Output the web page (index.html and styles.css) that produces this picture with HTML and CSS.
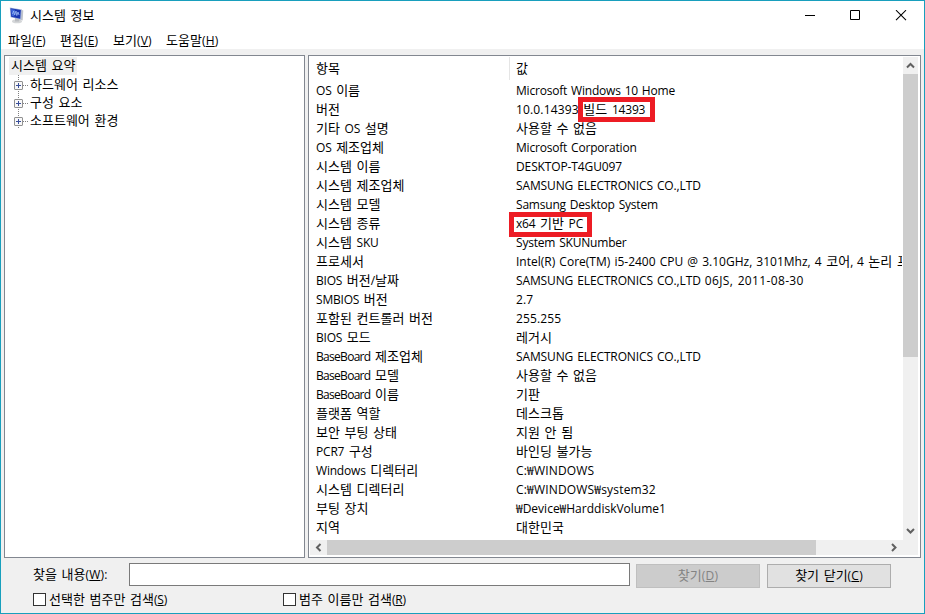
FILE: index.html
```
<!DOCTYPE html>
<html lang="ko">
<head>
<meta charset="utf-8">
<title>시스템 정보</title>
<link rel="stylesheet" href="styles.css">
</head>
<body>
<div class="window">
  <header class="titlebar">
    <svg class="app-icon" width="16" height="17" viewBox="0 0 16 17">
      <ellipse cx="8" cy="14.200" rx="5" ry="2" fill="#d4d6d8"/>
      <path d="M6 10l5 1-1 3.500H6z" fill="#b9bcc0"/>
      <path d="M12 2.500l2.300 1-.6 10-2.200-.8z" fill="#c0c4ca"/>
      <path d="M.8.5l12 2-.7 10.300L1.500 10.300z" fill="#a9b8dc"/>
      <path d="M1.500 1.300l10.300 1.700-.6 8.800-9-2.100z" fill="#1835b0"/>
      <path d="M2 2l4 .7-.8 6.800-2.300-.6z" fill="#3f66d8"/>
      <path d="M3.500 7l1.200-3 1 4 1.300-4 .8 4.500L9 5l1 3" fill="none" stroke="#9dbdf5" stroke-width=".8"/>
    </svg>
    <h1>시스템 정보</h1>
    <svg class="controls" width="103" height="12" viewBox="0 0 103 12" fill="none" stroke="#000">
      <path d="M0 5.500h10"/>
      <path d="M45.500.5h9v9h-9z"/>
      <path d="M91 .2l10 10M101 .2l-10 10" stroke-width="1.100"/>
    </svg>
  </header>
  <nav class="menu">
    <span>파일<span class="en key">(<u>F</u>)</span></span>
    <span>편집<span class="en key">(<u>E</u>)</span></span>
    <span>보기<span class="en key">(<u>V</u>)</span></span>
    <span>도움말<span class="en key">(<u>H</u>)</span></span>
  </nav>
  <main class="panes">
    <section class="tree">
      <div class="root"><span>시스템 요약</span></div>
      <div class="node"><svg width="16" height="18" viewBox="0 0 16 18"><use href="#plus"/></svg><span>하드웨어 리소스</span></div>
      <div class="node"><svg width="16" height="18" viewBox="0 0 16 18"><use href="#plus"/></svg><span>구성 요소</span></div>
      <div class="node"><svg width="16" height="18" viewBox="0 0 16 18"><use href="#plus"/></svg><span>소프트웨어 환경</span></div>
    </section>
    <section class="list">
      <div class="table">
        <div class="row head"><span>항목</span><span>값</span></div>
        <div class="row"><span><span class="en">OS</span> 이름</span><span class="en">Microsoft Windows 10 Home</span></div>
        <div class="row"><span>버전</span><span class="build"><span class="en num">10.0.14393</span> 빌드 <span class="en">14393</span></span></div>
        <div class="row"><span>기타 <span class="en">OS</span> 설명</span><span>사용할 수 없음</span></div>
        <div class="row"><span><span class="en">OS</span> 제조업체</span><span class="en">Microsoft Corporation</span></div>
        <div class="row"><span>시스템 이름</span><span class="en caps">DESKTOP-T4GU097</span></div>
        <div class="row"><span>시스템 제조업체</span><span class="en caps">SAMSUNG ELECTRONICS CO.,LTD</span></div>
        <div class="row"><span>시스템 모델</span><span class="en">Samsung Desktop System</span></div>
        <div class="row"><span>시스템 종류</span><span class="arch"><span class="en">x64</span> 기반 <span class="en">PC</span></span></div>
        <div class="row"><span>시스템 <span class="en">SKU</span></span><span class="en">System SKUNumber</span></div>
        <div class="row"><span>프로세서</span><span><span class="en cpu">Intel(R) Core(TM) i5-2400 CPU @ 3.10GHz, 3101Mhz, 4</span> 코어<span class="en">, 4</span> 논리 프로세서</span></div>
        <div class="row"><span><span class="en">BIOS</span> 버전<span class="en">/</span>날짜</span><span class="en caps">SAMSUNG ELECTRONICS CO.,LTD <span class="num">06JS, 2011-08-30</span></span></div>
        <div class="row"><span><span class="en">SMBIOS</span> 버전</span><span class="en num">2.7</span></div>
        <div class="row"><span>포함된 컨트롤러 버전</span><span class="en num">255.255</span></div>
        <div class="row"><span><span class="en">BIOS</span> 모드</span><span>레거시</span></div>
        <div class="row"><span><span class="en board">BaseBoard</span> 제조업체</span><span class="en caps">SAMSUNG ELECTRONICS CO.,LTD</span></div>
        <div class="row"><span><span class="en board">BaseBoard</span> 모델</span><span>사용할 수 없음</span></div>
        <div class="row"><span><span class="en board">BaseBoard</span> 이름</span><span>기판</span></div>
        <div class="row"><span>플랫폼 역할</span><span>데스크톱</span></div>
        <div class="row"><span>보안 부팅 상태</span><span>지원 안 됨</span></div>
        <div class="row"><span><span class="en">PCR7</span> 구성</span><span>바인딩 불가능</span></div>
        <div class="row"><span><span class="en">Windows</span> 디렉터리</span><span class="en path">C:₩WINDOWS</span></div>
        <div class="row"><span>시스템 디렉터리</span><span class="en path">C:₩WINDOWS₩system32</span></div>
        <div class="row"><span>부팅 장치</span><span class="en device">₩Device₩HarddiskVolume1</span></div>
        <div class="row"><span>지역</span><span>대한민국</span></div>
      </div>
      <div class="vscroll">
        <svg width="15" height="17" viewBox="0 0 15 17"><path d="M4 10.500l3.500-3.500 3.500 3.500"/></svg>
        <div class="thumb"></div>
        <svg width="15" height="17" viewBox="0 0 15 17"><path d="M4 6l3.500 3.500L11 6"/></svg>
      </div>
      <div class="hscroll">
        <svg width="17" height="15" viewBox="0 0 17 15"><path d="M10.500 4L7 7.500l3.500 3.500"/></svg>
        <div class="thumb"></div>
        <svg width="17" height="15" viewBox="0 0 17 15"><path d="M7 4l3.500 3.500L7 11"/></svg>
      </div>
    </section>
  </main>
  <footer>
    <div class="find">
      <label><span>찾을 내용<span class="en key">(<u>W</u>):</span></span></label>
      <input type="text">
      <button disabled><span>찾기<span class="en key">(<u>D</u>)</span></span></button>
      <button><span>찾기 닫기<span class="en key">(<u>C</u>)</span></span></button>
    </div>
    <div class="options">
      <div class="option"><i></i><span>선택한 범주만 검색<span class="en">(<u>S</u>)</span></span></div>
      <div class="option"><i></i><span>범주 이름만 검색<span class="en">(<u>R</u>)</span></span></div>
    </div>
  </footer>
</div>
<svg width="0" height="0" class="defs">
  <symbol id="plus" viewBox="0 0 16 18">
    <path d="M4.500 0v18M9 10.500h5" stroke="#808080" stroke-dasharray="1 1"/>
    <rect x=".5" y="6.500" width="8" height="8" rx=".5" fill="#f8f8f8" stroke="#919191"/>
    <path d="M2 10.500h5M4.500 8v5" stroke="#3a4f9a"/>
  </symbol>
</svg>
</body>
</html>
```
FILE: styles.css
```
*, *::after { box-sizing: border-box; }
body {
  margin: 0;
  font: 13px/19px "Noto Sans CJK KR", sans-serif;
  word-spacing: 1px;
  color: #000;
  overflow: hidden;
}
.defs { position: absolute; }
.en {
  font-family: "Open Sans", "Noto Sans CJK KR", sans-serif;
  font-size: 12px;
  letter-spacing: -0.2px;
}
.caps { letter-spacing: -0.12px; }
.num { letter-spacing: 0.15px; }
.caps .num { letter-spacing: 0.35px; }
.cpu { letter-spacing: 0; }
.board { letter-spacing: -0.7px; }
.path { letter-spacing: 0.18px; }
.device { letter-spacing: 0; }
.key { letter-spacing: 0.2px; }
u { text-underline-offset: 1px; }
.window {
  width: 925px;
  height: 614px;
  border: 1px solid #189fbd;
  background: #f0f0f0;
  display: flex;
  flex-direction: column;
}
.titlebar {
  height: 29px;
  background: #fff;
  display: flex;
  align-items: center;
  padding: 0 16px 0 8px;
}
.titlebar h1 {
  font-size: 13px;
  font-weight: 400;
  margin: -2px auto 0 5px;
}
.controls { margin-top: 1px; }
.menu {
  height: 19px;
  background: #fff;
  display: grid;
  grid-template-columns: 52px 53px 53px 60px;
  padding-left: 7px;
}
.panes {
  height: 503px;
  margin: 6px 3px 0;
  display: flex;
  gap: 3px;
}
.tree {
  width: 301px;
  border: 1px solid #828790;
  background: #fff;
  padding: 1px 4px;
  line-height: 18px;
}
.root {
  width: 68px;
  height: 18px;
  padding-left: 2px;
  background: #f0f0f0;
}
.root span { display: block; position: relative; top: -1px; }
.node {
  display: flex;
  height: 18px;
  padding-left: 5px;
}
.list {
  flex: 1;
  border: 1px solid #828790;
  background: #fff;
  padding: 1px 2px 1px 1px;
  display: grid;
  grid-template-columns: 1fr 15px;
  grid-template-rows: 483px 15px;
  min-width: 0;
}
.table { overflow: hidden; padding-right: 1px; }
.row {
  display: grid;
  grid-template-columns: 200px 1fr;
  height: 19px;
  white-space: pre;
}
.row > span { padding-left: 6px; min-width: 0; position: relative; }
.row:nth-child(11) > span { overflow: hidden; }
.row > .en { padding-top: 1px; }
.head { height: 23px; line-height: 22px; }
.head > span:first-child { border-right: 1px solid #e5e5e5; }
.build::after, .arch::after {
  content: "";
  position: absolute;
  border: 5px solid #ed1c24;
  height: 25px;
}
.build::after { left: 68px; top: -2px; width: 77px; }
.arch::after { left: -1px; top: -1px; width: 83px; }
.vscroll, .hscroll { background: #f0f0f0; display: flex; }
.vscroll { flex-direction: column; }
.vscroll .thumb { height: 283px; background: #cdcdcd; margin-bottom: auto; }
.hscroll { grid-column: 1 / 3; padding-right: 16px; }
.hscroll .thumb { width: 489px; background: #cdcdcd; margin-right: auto; }
.vscroll path, .hscroll path { fill: none; stroke: #606060; stroke-width: 2; }
.find {
  display: flex;
  align-items: center;
  margin-top: 5px;
  padding-left: 32px;
  height: 24px;
}
.find label { width: 96px; margin-top: -2px; }
.find input {
  width: 501px;
  height: 23px;
  align-self: flex-start;
  border: 1px solid #7a7a7a;
  background: #fff;
  padding: 0;
  margin: 0 6px 0 0;
}
.find button {
  width: 124px;
  height: 24px;
  margin: 2px 7px 0 0;
  padding: 0 0 2px;
  font: inherit;
  word-spacing: 1px;
  color: #000;
  background: #e1e1e1;
  border: 1px solid #adadad;
}
.find button:disabled {
  background: #ccc;
  border-color: #bfbfbf;
  color: #838383;
}
.options {
  display: grid;
  grid-template-columns: 250px 250px;
  margin: 3px 0 0 32px;
}
.option { display: flex; align-items: center; }
.option span { margin-top: -1px; }
.option .en { margin: 0; }
.option i {
  width: 13px;
  height: 13px;
  border: 1px solid #333;
  background: #fff;
  margin-right: 3px;
}
```
